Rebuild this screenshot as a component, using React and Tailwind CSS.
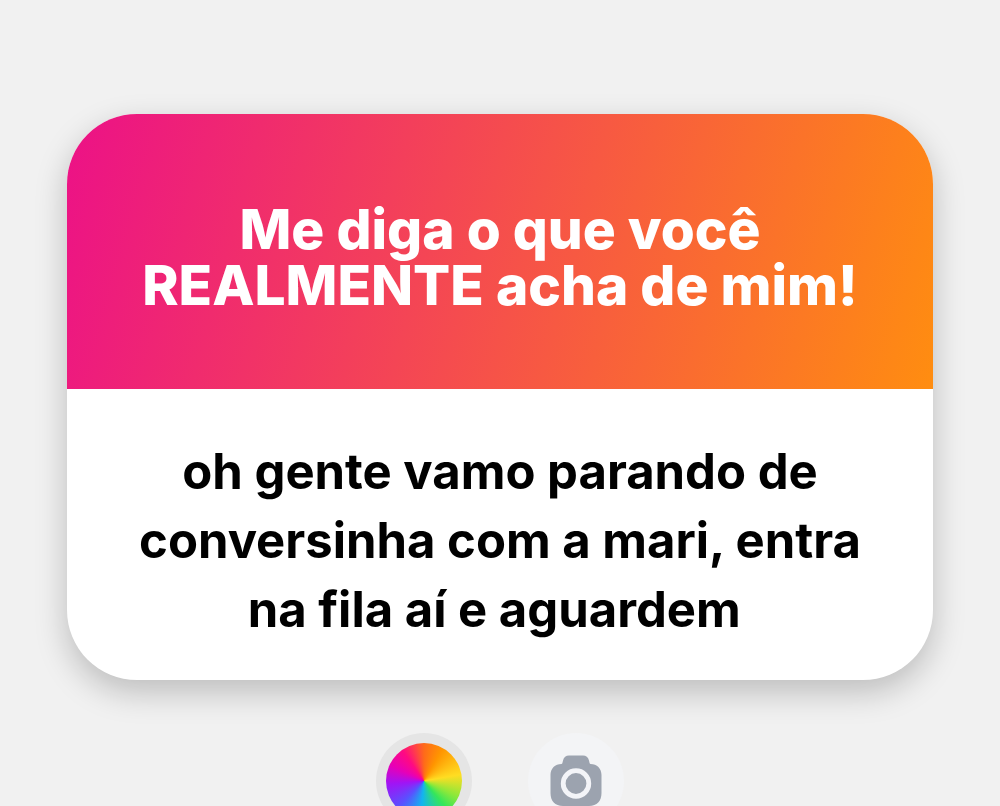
function CameraIcon() {
  return (
    <svg viewBox="0 0 52 52" className="size-[52px]" aria-hidden="true">
      <path
        fill="#9ca3af"
        d="M11.500 9C12.600 8.500 12.500 7.500 13 5.500C13.800 2 16 .5 19 .5H33C36 .5 38.200 2 39 5.500C39.500 7.500 39.400 8.500 40.500 9C47 9 51.500 13.500 51.500 20V38C51.500 46 47 51 39 51H13C5 51 .5 46 .5 38V20C.5 13.500 5 9 11.500 9Z"
      />
      <circle cx="26" cy="28.500" r="12.800" fill="none" stroke="#f3f4f8" strokeWidth="4.800" />
    </svg>
  );
}

export default function App() {
  return (
    <main className="flex h-screen flex-col items-center overflow-hidden bg-[#f1f1f1] px-[67px] pt-[114px] font-['Inter','Liberation_Sans',sans-serif]">
      <article className="w-full shrink-0 overflow-hidden rounded-[70px] bg-white text-center shadow-[0_12px_32px_rgba(0,0,0,0.22)]">
        <header className="bg-[linear-gradient(105deg,#ec1187,#ff8d10)] px-12 pt-[87px] pb-[76px]">
          <h1 className="text-[55px] leading-[56px] font-extrabold text-white">
            Me diga o que você
            <br />
            REALMENTE acha de mim!
          </h1>
        </header>
        <p className="px-12 pt-12 pb-9 text-[49px] leading-[69px] font-bold text-black">
          oh gente vamo parando de
          <br />
          conversinha com a mari, entra
          <br />
          na fila aí e aguardem&nbsp;
        </p>
      </article>
      <div className="mt-[53px] flex shrink-0 gap-14">
        <button
          type="button"
          aria-label="Cor"
          className="flex size-24 items-center justify-center rounded-full bg-[#e5e5e5]"
        >
          <span className="size-[76px] rounded-full bg-[conic-gradient(#ff6a1a,#ff9500_30deg,#ffdd22_80deg,#8de83a_115deg,#35e65a_140deg,#12b5ef_185deg,#5a50ff_225deg,#a014f5_265deg,#e600b8_295deg,#ff0a82_325deg,#ff6a1a)]" />
        </button>
        <button
          type="button"
          aria-label="Câmera"
          className="flex size-24 items-center justify-center rounded-full bg-[#f3f4f6]"
        >
          <CameraIcon />
        </button>
      </div>
    </main>
  );
}
